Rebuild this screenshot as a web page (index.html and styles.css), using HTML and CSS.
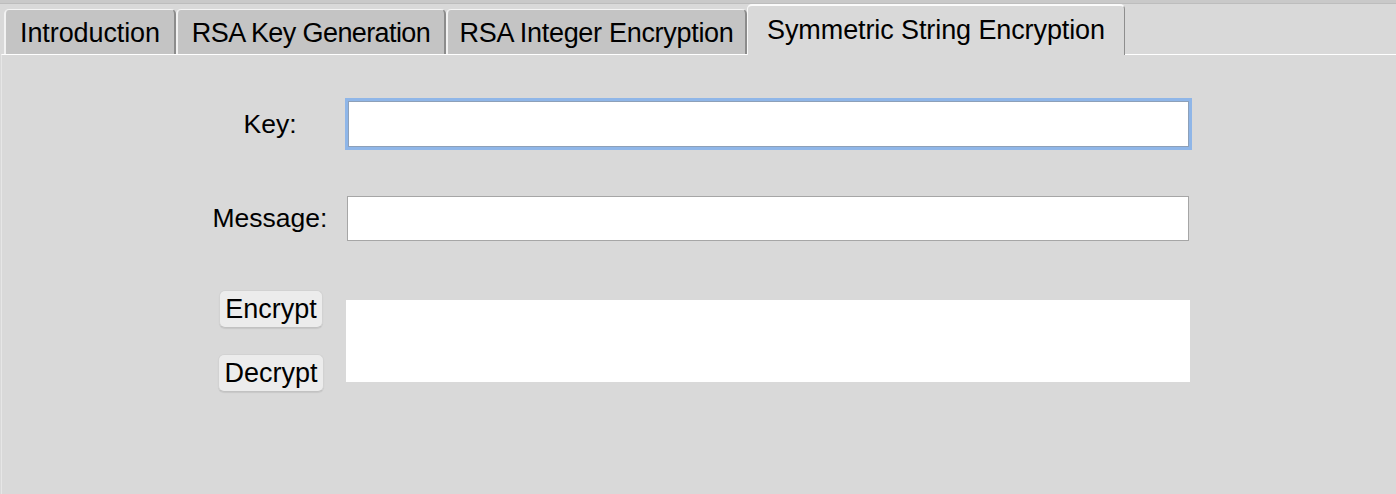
FILE: index.html
```html
<!DOCTYPE html>
<html lang="en">
<head>
<meta charset="utf-8">
<title>Symmetric String Encryption</title>
<link rel="stylesheet" href="styles.css">
</head>
<body>
<div class="topline"></div>
<div class="tabbar">
  <div class="tab tab-intro">Introduction</div>
  <div class="tab tab-keygen">RSA Key Generation</div>
  <div class="tab tab-int">RSA Integer Encryption</div>
  <div class="tab tab-sym active">Symmetric String Encryption</div>
</div>
<div class="panel">
  <div class="form">
    <label class="label" for="key">Key:</label>
    <input class="entry focused" id="key" type="text">
    <label class="label" for="msg">Message:</label>
    <input class="entry" id="msg" type="text">
    <div class="buttons">
      <button class="btn" type="button">Encrypt</button>
      <button class="btn" type="button">Decrypt</button>
    </div>
    <div class="output"></div>
  </div>
</div>
</body>
</html>
```
FILE: styles.css
```css
html, body {
  margin: 0;
  padding: 0;
}
body {
  background: #d9d9d9;
  font-family: "Liberation Sans", Arial, sans-serif;
  color: #000;
  height: 494px;
  overflow: hidden;
}
.topline {
  height: 3px;
  background: #c9c9c9;
  border-bottom: 1px solid #bdbdbd;
}
.tabbar {
  display: flex;
  align-items: flex-end;
  height: 50px;
  padding-left: 4px;
}
.tab {
  box-sizing: border-box;
  height: 45px;
  padding: 2px 0 0;
  display: flex;
  align-items: center;
  justify-content: center;
  font-size: 27px;
  letter-spacing: -0.1px;
  background: #c4c4c4;
  border-top: 1px solid #f4f4f4;
  border-left: 2px solid #f2f2f2;
  border-right: 2px solid #8c8c8c;
  border-radius: 5px 5px 0 0;
  white-space: nowrap;
  overflow: hidden;
}
.tab-intro { width: 172px; }
.tab-keygen { width: 270px; letter-spacing: -0.6px; }
.tab-int { width: 301px; letter-spacing: -0.3px; }
.tab-sym { width: 378px; }
.tab.active {
  height: 51px;
  margin-bottom: -1px;
  position: relative;
  z-index: 1;
  background: #d9d9d9;
  border-top: 2px solid #fbfbfb;
  border-left: 1px solid #f8f8f8;
  border-right: 1px solid #8e8e8e;
  padding: 0 0 1px;
}
.panel {
  border-top: 1px solid #ffffff;
  border-left: 1px solid #e6e6e6;
  margin-left: 1px;
  height: 440px;
  padding-top: 46px;
  box-sizing: border-box;
}
.form {
  display: grid;
  grid-template-columns: 118px 843px;
  grid-template-rows: 46px 45px 102px;
  column-gap: 18px;
  row-gap: 49px;
  margin-left: 209px;
  align-items: center;
}
.label {
  font-size: 26.5px;
  text-align: center;
  color: #000;
}
.entry {
  box-sizing: border-box;
  width: 842px;
  height: 45px;
  margin: 0;
  border: 1px solid #a6a6a6;
  background: #ffffff;
  font: inherit;
  padding: 0 6px;
  outline: none;
}
.entry.focused {
  width: 841px;
  height: 46px;
  margin-left: 1px;
  border-color: #8da0b8;
  box-shadow: 0 0 0 3px #8fb6e8;
}
.buttons {
  display: flex;
  flex-direction: column;
  align-items: center;
  gap: 26px;
  padding-left: 2px;
}
.btn {
  box-sizing: border-box;
  height: 38px;
  padding: 0 5px;
  font-family: "Liberation Sans", Arial, sans-serif;
  font-size: 27px;
  color: #000;
  background: #ececec;
  border: 1px solid #d2d2d2;
  border-bottom-color: #c2c2c2;
  border-radius: 6px;
  box-shadow: 0 1px 1px rgba(0,0,0,0.08);
  line-height: 1;
}
.output {
  width: 844px;
  height: 82px;
  margin-left: -1px;
  background: #ffffff;
}
```
